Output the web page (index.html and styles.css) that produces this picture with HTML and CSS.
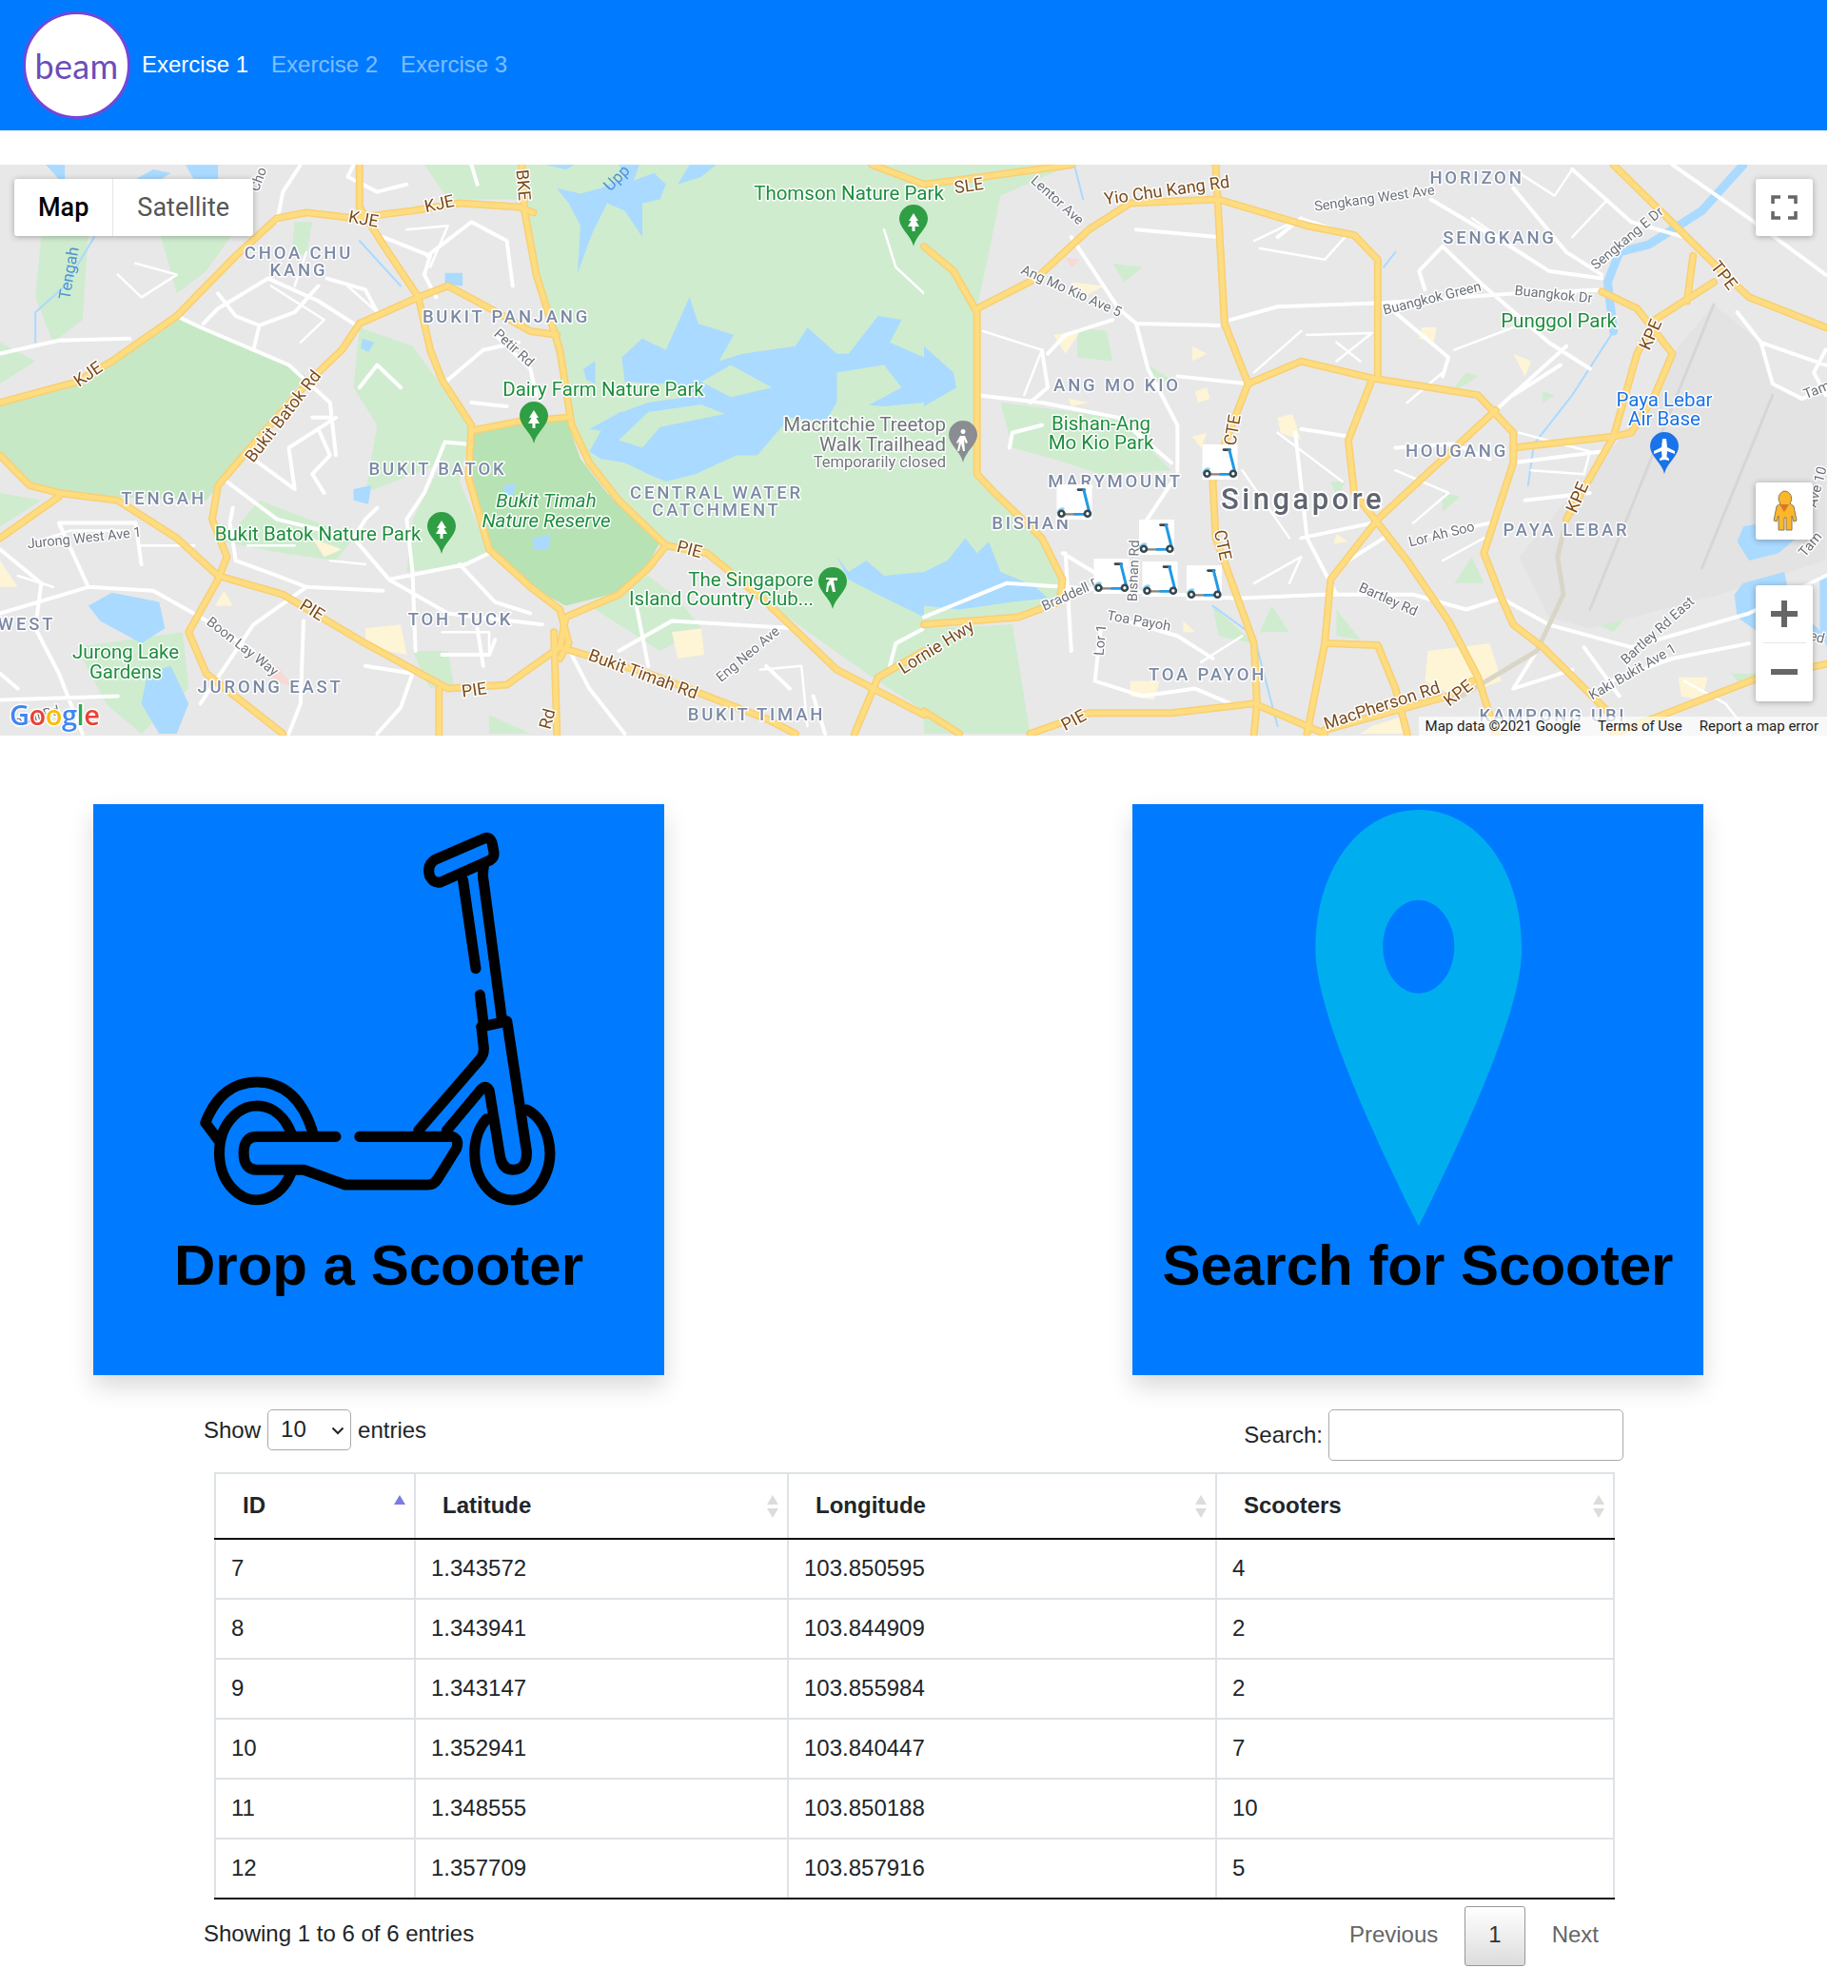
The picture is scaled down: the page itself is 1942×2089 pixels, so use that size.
FILE: index.html
```html
<!DOCTYPE html>
<html lang="en">
<head>
<meta charset="utf-8">
<title>Beam</title>
<link rel="stylesheet" href="styles.css">
</head>
<body>
<nav class="navbar">
  <a class="logo"><span class="logo-text">beam</span></a>
  <ul class="nav-links">
    <li><a class="nav-link active">Exercise 1</a></li>
    <li><a class="nav-link">Exercise 2</a></li>
    <li><a class="nav-link">Exercise 3</a></li>
  </ul>
</nav>

<section class="map">
  <svg class="map-canvas" width="1920" height="600" viewBox="0 173 1920 600" xmlns="http://www.w3.org/2000/svg">
    <defs>
      <symbol id="pin" viewBox="0 0 30 44">
        <path d="M15 44C13 33 0 25 0 15a15 15 0 0 1 30 0C30 25 17 33 15 44Z"/>
      </symbol>
      <symbol id="scoot" viewBox="0 0 112 112">
        <rect class="m-box" width="112" height="112"/>
        <path class="m-halo" d="M3 92A15 15 0 0 1 24 79"/>
        <path class="m-handle" d="M68 17H88"/>
        <path class="m-stem" d="M86 18L104 90"/>
        <path class="m-deck" d="M22 95H58"/>
        <path class="m-stem" d="M58 95H90"/>
        <circle class="m-wheel" cx="15" cy="93" r="9"/>
        <circle class="m-wheel" cx="98" cy="93" r="9"/>
      </symbol>
      <g id="hw" class="nss">
        <g transform="translate(0 170) scale(.6193 .3954)">
          <path d="M0 640L130 585 190 530 300 410 400 250 470 150 520 135 600 150 700 130 780 110 880 120 905 135"/>
          <path d="M885 8L890 130 910 300 950 500 970 700 1000 800 1050 900 1130 1020 1200 1040 1300 1170 1420 1350 1568 1470"/>
          <path d="M610 8L610 120 650 220 710 360 730 500 750 580 800 700 795 840 830 1030 900 1130 950 1190 965 1280 950 1320"/>
          <path d="M0 780L50 860 100 880 200 900 300 1000 370 1100 480 1150 620 1280 760 1400 860 1390 950 1290 960 1210 1050 1150 1100 1080 1130 1020"/>
          <path d="M710 360L610 430 580 500 520 590 430 750 370 860 360 950 385 1050 370 1110 320 1250 350 1360 480 1520"/>
          <path d="M710 360L760 330 820 380 900 450 945 460"/>
          <path d="M800 715L880 690 960 680"/>
          <path d="M0 1000L100 890"/>
          <path d="M950 1290L1100 1360 1300 1480 1350 1520"/>
          <path d="M745 1400L745 1520M940 1250L945 1520"/>
          <path d="M1568 1300L1490 1370 1450 1520"/>
          <path d="M1480 8L1568 60"/>
        </g>
        <g transform="translate(971 170) scale(.6193 .3954)">
          <path d="M0 60L100 40 250 8"/>
          <path d="M90 390L190 310 280 180 350 110 500 100 650 170 730 195 770 260 770 570"/>
          <path d="M495 8L510 430 550 590 510 750 490 850 495 1000 560 1280 565 1440 560 1520"/>
          <path d="M0 225L50 290 90 400 90 830 120 880 200 1000 235 1110 230 1170 160 1210 0 1230"/>
          <path d="M550 590L640 530 760 575 940 620 1000 720 1000 800 950 1040 980 1160 1000 1230 1050 1290 1160 1460"/>
          <path d="M760 580L720 740 730 880 770 960 820 1060 890 1220 940 1370 970 1520"/>
          <path d="M970 660L770 950 690 1110 680 1280 650 1520"/>
          <path d="M680 1280L770 1285 800 1400 820 1520"/>
          <path d="M1000 760L1170 730 1210 510 1240 420 1340 320"/>
          <path d="M1170 730L1090 950"/>
          <path d="M1170 8L1340 270 1400 360 1530 440"/>
          <path d="M1150 345L1210 390 1270 510 1240 620 1200 720 1170 730"/>
          <path d="M1305 250L1295 370"/>
          <path d="M180 1520L280 1465 420 1465 560 1440 680 1520"/>
          <path d="M0 1460L60 1520"/>
          <path d="M680 1510L890 1420 930 1380"/>
          <path d="M1170 1520L1410 1375 1530 1335"/>
        </g>
      </g>
    </defs>

    <rect class="land" x="0" y="173" width="1920" height="600"/>

    <g transform="translate(0 170) scale(.6193 .3954)">
      <path class="green" d="M720 8H1568V1460L1480 1370 1300 1170 1200 1040 1130 1020 1050 900 1000 800 970 680 910 300 890 130 880 100 760 100Z"/>
      <path class="green-d" d="M0 640L130 585 190 530 300 410 340 440 490 540 520 570 430 740 370 860 350 900 200 890 100 880 50 860 0 780Z"/>
      <path class="green" d="M610 440L700 490 760 620 800 710 780 850 830 1040 780 1070 690 1090 700 950 750 800 620 880 640 700 600 600Z"/>
      <path class="green" d="M0 480L60 530 0 590ZM70 200L150 190 140 420 90 480 60 360Z"/>
      <path class="green" d="M380 1010L440 900 540 960 600 1000 570 1060 480 1040Z"/>
      <path class="green" d="M130 1290L310 1250 320 1400 240 1520 180 1440Z"/>
      <path class="green" d="M270 180L400 180 350 290 300 350ZM500 160L530 160 520 250 495 240Z"/>
      <path class="green" d="M0 880L70 900 0 970Z"/>
      <path class="green" d="M700 1300L760 1300 770 1390 730 1400ZM830 1470L900 1520 830 1520ZM1000 1180L1100 1100 1150 1160 1190 1240 1120 1300Z"/>
      <path class="green-x" d="M800 720L880 690 960 680 985 790 1030 880 1120 1010 1090 1100 1060 1140 960 1180 900 1130 840 1050 820 960 795 850 795 760Z"/>
      <path class="water" d="M925 8H975L960 20ZM945 70L985 85 1020 70 1060 40 1050 8H1085L1075 50 1110 30 1130 60 1120 100 1090 110 1090 200 1060 130 1030 110 1005 190 980 295 985 170 965 110ZM1170 8H1215L1190 40 1150 60Z"/>
      <path class="water" d="M1000 770L1020 715 1000 710 1060 660 1030 680 1100 640 1190 620 1130 590 1060 585 1055 520 1090 470 1130 500 1170 360 1185 430 1245 460 1220 530 1260 510 1350 490 1370 440 1420 510 1440 510 1490 410 1530 420 1510 480 1568 520V640L1500 650 1420 640 1400 690 1340 680 1285 780 1250 780 1180 830 1130 850 1100 830 1060 800 1020 790Z"/>
      <path class="green" d="M1240 540L1310 600 1240 625 1190 585ZM1190 645L1230 670 1120 705 1090 760 1050 740 1100 665ZM1420 560L1500 540 1530 600 1470 650 1420 640ZM1250 450L1280 430 1340 470 1310 495 1260 500Z"/>
      <path class="water" d="M1420 1050L1440 1090 1470 1060 1500 1100 1568 1090V1210L1490 1150 1440 1110Z"/>
      <path class="water" d="M150 1180L190 1145 270 1170 280 1240 240 1280 170 1220ZM250 1360L290 1340 320 1440 300 1520 270 1520 240 1440ZM600 870L630 860 625 910 600 900ZM615 470L635 480 625 505 612 495ZM905 1000L935 990 930 1030 905 1030ZM855 860L875 855 870 890 855 885ZM755 295L785 295 785 330 755 325ZM110 60L80 8H110ZM215 60L260 20 290 30 270 50ZM315 8H370L370 50 330 50ZM990 550L1010 530 1010 590 995 580Z"/>
      <path class="beige" d="M620 1240L680 1230 690 1310 620 1290ZM1140 1250L1190 1240 1195 1310 1150 1320ZM0 1060L30 1130H0ZM380 1140L395 1180 365 1180ZM530 1000L580 1030 550 1050Z"/>
      <path class="pinkish" d="M470 1340L500 1400 455 1370Z"/>
      <g class="nss">
        <path class="wr" d="M510 8L480 80 470 160M300 410L340 440 430 500 490 540 560 640 570 780M0 510L100 475 220 470M455 310L540 370 600 430M455 310L370 390 345 430M370 350L400 410 440 435 500 400 540 330M440 435L430 500M555 310L620 340 640 400M650 200L730 250 720 300 740 360M725 250L800 160 860 210 870 330M840 460L900 550 910 620M760 580L820 500 880 480M800 640L860 650M755 745L790 750M755 745L720 880 690 950 700 1090 705 1300M385 850L470 950 600 1000 660 1110 790 1070 830 1040M430 790L500 870 490 760 570 680M395 920L390 960 400 1060 470 1100 520 1130 650 1140M0 1200L150 1130 260 1140 340 1210 430 1300M150 1130L100 960 230 960 240 1070M520 1130L430 1230 340 1440M515 1220L510 1440 490 1520M660 1110L760 1200 920 1230M780 1070L840 1170 900 1200M0 1030L70 1120 60 1240 100 1360 140 1520M0 1430L200 1420M750 1310L830 1310 840 1270M1050 1300L1140 1220 1350 1240M960 1280L1000 1400 1060 1520M1568 1240L1520 1280 1510 1340M1300 1340L1340 1400M620 1340L700 1360 680 1450 640 1520M0 1360L30 1400M600 8L590 40 640 80 690 60M800 8L810 60M610 600L640 540 680 600M530 680H560M540 710L560 780 530 830 550 880M600 1000L620 950 640 920M810 1240L820 1340M1380 1420L1400 1520M1080 1180L1100 1340"/>
        <path class="wr-t" d="M200 300L240 360 300 300 230 270M690 180L760 170 730 280M1500 180L1520 280 1568 350M1290 1350L1360 1340 1370 1500M520 240L500 330M590 330L640 400M460 330L550 420M550 420L510 480M80 1000L120 980 210 980M240 1020L330 1020M30 1100L90 1130M420 1020L500 1020M620 1070L560 1060M750 1250L830 1250 830 1300"/>
        <path class="blue-l" d="M80 8L110 60M160 200L110 330 60 400 60 480M610 210L680 330M905 1000L920 1020"/>
      </g>
    </g>

    <g transform="translate(971 170) scale(.6193 .3954)">
      <path class="green" d="M0 8H250L130 90 90 390 90 830 120 880 200 1000 235 1110 230 1170 160 1210 0 1230Z"/>
      <path class="water" d="M0 490L50 560 55 600 0 650ZM0 1090L40 1060 70 1000 90 1040 110 1010 130 1090 190 1130 210 1160 150 1170 60 1190 0 1180Z"/>
      <path class="green" d="M320 270L370 280 340 320ZM260 440L310 450 320 530 260 520ZM130 640L330 680 420 820 300 830 220 790 150 760ZM490 1180L560 1280 500 1260ZM150 1230L180 1520H0V1240ZM590 1180L620 1250 570 1250ZM700 1190L740 1270 700 1260ZM1130 1220L1190 1210 1170 1250ZM1370 1360L1420 1360 1390 1400ZM380 540L420 580 390 590ZM920 560L940 570 890 620ZM930 1050L950 1120 900 1120ZM690 850L715 850 700 890ZM880 880L910 890 880 930ZM1050 610L1070 620 1050 640Z"/>
      <path class="airport" d="M1340 380L1420 480 1440 590 1490 630 1530 620V1060L1350 1150 1130 1240 1060 1210 1010 1050 1090 900 1190 720 1240 620 1270 510Z"/>
      <path class="water" d="M1390 970L1450 950 1480 1000 1450 1040 1400 1060 1380 1010ZM1390 1120L1460 1090 1470 1170 1530 1260 1450 1290 1380 1210 1375 1150ZM1520 1100L1532 1100V1290L1520 1240Z"/>
      <path class="beige" d="M250 320L305 330 265 365ZM220 460L265 450 240 510ZM455 490L480 510 455 530ZM600 680L625 670 640 740 605 720ZM845 440L870 440 865 480 840 470ZM1000 510L1030 530 1020 570ZM245 630L280 640 250 650ZM460 610L480 600 485 630 465 640ZM855 1300L960 1280 980 1380 900 1420 850 1380ZM350 1380L400 1380 390 1430 350 1420ZM1280 1370L1330 1370 1320 1430 1285 1420ZM440 1220L460 1250 440 1250ZM700 990L720 1010 695 1015ZM760 1500L820 1470 820 1520 740 1520ZM455 730L480 720 470 760Z"/>
      <path class="pinkish" d="M240 255L265 260 250 280Z"/>
      <g class="nss">
        <path class="river" d="M1390 8L1320 130 1230 220 1180 240 1160 320 1170 450"/>
        <path class="blue-l" d="M1170 450L1100 620 1035 750 1025 860M255 8L270 100M800 240L780 280M490 1180L560 1260 600 1500"/>
        <path class="wr" d="M170 330L280 180M250 200L330 390 360 430 380 550 430 700 430 820M360 430L500 435M520 420L600 385 780 375 1000 350 1150 340M210 510L240 460 320 420M200 500L210 600 180 640M90 620L200 640 330 680 420 800M145 760L150 720 200 700M430 570L550 590M780 375L890 520 880 570M880 225L950 330 1060 480 1130 550M1090 490L970 660M880 225L840 290 850 340M860 100L990 220 1060 290 1150 310M1000 70L1090 240 1150 300M1270 8L1400 150 1530 300M640 710L720 730M0 1210L140 1120 430 1150 530 1160 680 1150 830 1150 920 1190 980 1160 1060 1230 1200 1290 1400 1200 1530 1100M240 1040L250 1300M370 970L430 830M235 1040L330 1130M300 1240L290 1380 370 1420 460 1400 520 1440M340 1220L430 1260 490 1320M1150 1390L1270 1320 1400 1280M1420 480L1440 590 1490 630 1530 600M1380 400L1420 480 1530 540M630 720L650 1000 700 1150M840 1000L960 960M1120 1290L1180 1420M1040 1300L1000 1400 1100 1350M760 960L640 1000M1530 500L1510 560 1530 620M600 200L640 150M1000 800L1150 770M1020 900L1130 880M1000 620L1080 540M800 760L900 750 960 790M780 1000L720 1060M500 200L360 180M1100 20L1200 160 1290 200"/>
        <path class="wr-t" d="M560 210L640 150 720 190 680 260 570 230M650 460L760 455 700 530M100 450L200 500 170 620M950 1000L880 1060M1010 720L1130 770 1120 830 1030 820M540 820L620 1000M600 720L710 850M1010 30L1070 90 1100 20M560 1120L640 1050 620 1120M820 640L880 560M700 480L740 530M560 560L640 450M800 820L890 880 830 960M540 1260L470 1330M1290 1380L1360 1440 1400 1520M900 500L1000 440M930 150L1020 250M1160 100L1100 200"/>
        <path class="runway" d="M1340 380L1130 1190M1440 620L1320 1080"/>
        <path class="tunnel" d="M1090 950L1075 1050 1085 1150 1040 1300 890 1440"/>
      </g>
    </g>

    <use href="#hw" class="hw-case"/>
    <use href="#hw" class="hw-fill"/>

    <g class="l-road">
      <text transform="translate(463 220) rotate(-12)">KJE</text>
      <text transform="translate(381 236) rotate(10)">KJE</text>
      <text transform="translate(96 398) rotate(-35)">KJE</text>
      <text transform="translate(544 195) rotate(85)">BKE</text>
      <text transform="translate(1019 201) rotate(-8)">SLE</text>
      <text transform="translate(1227 206) rotate(-8)">Yio Chu Kang Rd</text>
      <text transform="translate(302 441) rotate(-52)">Bukit Batok Rd</text>
      <text transform="translate(723 583) rotate(15)">PIE</text>
      <text transform="translate(325 646) rotate(32)">PIE</text>
      <text transform="translate(499 731) rotate(-8)">PIE</text>
      <text transform="translate(674 714) rotate(20)">Bukit Timah Rd</text>
      <text transform="translate(987 685) rotate(-32)">Lornie Hwy</text>
      <text transform="translate(1807 293) rotate(52)">TPE</text>
      <text transform="translate(1740 354) rotate(-66)">KPE</text>
      <text transform="translate(1663 525) rotate(-66)">KPE</text>
      <text transform="translate(1301 453) rotate(-80)">CTE</text>
      <text transform="translate(1279 574) rotate(78)">CTE</text>
      <text transform="translate(1536 733) rotate(-38)">KPE</text>
      <text transform="translate(1454 747) rotate(-18)">MacPherson Rd</text>
      <text transform="translate(1131 762) rotate(-28)">PIE</text>
      <text transform="translate(581 757) rotate(-75)">Rd</text>
    </g>
    <g class="l-minor">
      <text transform="translate(537 369) rotate(42)">Petir Rd</text>
      <text transform="translate(789 691) rotate(-40)">Eng Neo Ave</text>
      <text transform="translate(89 570) rotate(-6)">Jurong West Ave 1</text>
      <text transform="translate(252 683) rotate(38)">Boon Lay Way</text>
      <text transform="translate(1445 213) rotate(-8)">Sengkang West Ave</text>
      <text transform="translate(1713 254) rotate(-40)">Sengkang E Dr</text>
      <text transform="translate(1506 318) rotate(-14)">Buangkok Green</text>
      <text transform="translate(1632 314) rotate(6)">Buangkok Dr</text>
      <text transform="translate(1108 214) rotate(42)">Lentor Ave</text>
      <text transform="translate(1124 310) rotate(24)">Ang Mo Kio Ave 5</text>
      <text transform="translate(1516 566) rotate(-14)">Lor Ah Soo</text>
      <text transform="translate(1457 634) rotate(24)">Bartley Rd</text>
      <text transform="translate(1745 666) rotate(-42)">Bartley Rd East</text>
      <text transform="translate(1718 710) rotate(-30)">Kaki Bukit Ave 1</text>
      <text transform="translate(1196 657) rotate(10)">Toa Payoh</text>
      <text transform="translate(1161 673) rotate(-85)">Lor 1</text>
      <text transform="translate(1131 627) rotate(-24)">Braddell Rd</text>
      <text transform="translate(1196 600) rotate(-88)">Bishan Rd</text>
      <text transform="translate(1911 414) rotate(-22)">Tam</text>
      <text transform="translate(1914 513) rotate(-75)">Ave 10</text>
      <text transform="translate(1904 673) rotate(15)">Bed</text>
      <text transform="translate(1906 575) rotate(-50)">Tam</text>
      <text transform="translate(40 757) rotate(-15)">onal Rd</text>
      <text transform="translate(276 190) rotate(-70)">Cho</text>
    </g>
    <g class="l-water">
      <text transform="translate(78 288) rotate(-80)">Tengah</text>
      <text transform="translate(652 191) rotate(-45)">Upp</text>
    </g>

    <g class="l-area">
      <text x="1552" y="193">HORIZON</text>
      <text x="1576" y="256">SENGKANG</text>
      <text x="314" y="272">CHOA CHU</text>
      <text x="314" y="290">KANG</text>
      <text x="532" y="339">BUKIT PANJANG</text>
      <text x="1174" y="411">ANG MO KIO</text>
      <text x="1531" y="480">HOUGANG</text>
      <text x="460" y="499">BUKIT BATOK</text>
      <text x="1172" y="512">MARYMOUNT</text>
      <text x="172" y="530">TENGAH</text>
      <text x="1084" y="556">BISHAN</text>
      <text x="753" y="524">CENTRAL WATER</text>
      <text x="753" y="542">CATCHMENT</text>
      <text x="1646" y="563">PAYA LEBAR</text>
      <text x="484" y="657">TOH TUCK</text>
      <text x="28" y="662">WEST</text>
      <text x="1269" y="715">TOA PAYOH</text>
      <text x="284" y="728">JURONG EAST</text>
      <text x="795" y="757">BUKIT TIMAH</text>
      <text x="1632" y="758">KAMPONG UBI</text>
    </g>
    <text class="l-city" x="1369" y="535">Singapore</text>

    <g class="l-green">
      <text x="892" y="210">Thomson Nature Park</text>
      <text x="634" y="416">Dairy Farm Nature Park</text>
      <text x="334" y="568">Bukit Batok Nature Park</text>
      <text x="789" y="616">The Singapore</text>
      <text x="758" y="636">Island Country Club...</text>
      <text x="132" y="692">Jurong Lake</text>
      <text x="132" y="713">Gardens</text>
      <text x="1157" y="452">Bishan-Ang</text>
      <text x="1157" y="472">Mo Kio Park</text>
      <text x="1638" y="344">Punggol Park</text>
      <text class="l-italic" x="574" y="533">Bukit Timah</text>
      <text class="l-italic" x="574" y="554">Nature Reserve</text>
    </g>
    <g class="l-grey">
      <text x="994" y="453">Macritchie Treetop</text>
      <text x="994" y="474">Walk Trailhead</text>
      <text class="l-small" x="994" y="491">Temporarily closed</text>
    </g>
    <g class="l-blue">
      <text x="1749" y="427">Paya Lebar</text>
      <text x="1749" y="447">Air Base</text>
    </g>

    <use href="#pin" class="p-green" x="945" y="215" width="30" height="44"/>
    <use href="#pin" class="p-green" x="546" y="422" width="30" height="44"/>
    <use href="#pin" class="p-green" x="449" y="538" width="30" height="44"/>
    <use href="#pin" class="p-green" x="860" y="596" width="30" height="44"/>
    <use href="#pin" class="p-grey" x="997" y="442" width="30" height="44"/>
    <use href="#pin" class="p-blue" x="1734" y="454" width="30" height="44"/>
    <path class="p-icon" d="M960 224l-5 8h2.500l-3.500 6h4.500v5h3v-5h4.500l-3.500-6h2.500Z"/>
    <path class="p-icon" d="M561 431l-5 8h2.500l-3.500 6h4.500v5h3v-5h4.500l-3.500-6h2.500Z"/>
    <path class="p-icon" d="M464 547l-5 8h2.500l-3.500 6h4.500v5h3v-5h4.500l-3.500-6h2.500Z"/>
    <path class="p-icon" d="M868 607h12v3h-4l2 12h-3l-2-8-2 2-1 6h-2l1-9 3-4h-4Z"/>
    <path class="p-icon" d="M1012 451a2.500 2.500 0 1 0 .1 0ZM1009 458h5l3 7-2 1-2-4 1 12h-2l-2-8-2 8h-2l2-10-2 2-1-1Z"/>
    <path class="p-icon" d="M1747 461h4l1 9 8 4v3l-8-3-.5 6 2.500 2v2l-5-1-5 1v-2l2.500-2-.5-6-8 3v-3l8-4Z"/>

    <use href="#scoot" x="1263" y="467" width="38" height="37"/>
    <use href="#scoot" x="1110" y="509" width="38" height="37"/>
    <use href="#scoot" x="1197" y="546" width="37" height="37"/>
    <use href="#scoot" x="1149" y="587" width="38" height="37"/>
    <use href="#scoot" x="1200" y="590" width="38" height="37"/>
    <use href="#scoot" x="1247" y="594" width="37" height="37"/>

    <text class="l-google" x="10" y="762"><tspan class="g-b">G</tspan><tspan class="g-r">o</tspan><tspan class="g-y">o</tspan><tspan class="g-b">g</tspan><tspan class="g-g">l</tspan><tspan class="g-r">e</tspan></text>
  </svg>

  <div class="map-type">
    <span class="map-type-btn current">Map</span>
    <span class="map-type-btn">Satellite</span>
  </div>
  <button class="map-ctl fullscreen" aria-label="Fullscreen">
    <svg width="28" height="26" viewBox="0 0 28 26"><path class="ctl-stroke" d="M2 9V2H10M18 2H26V9M26 17V24H18M10 24H2V17"/></svg>
  </button>
  <button class="map-ctl pegman" aria-label="Street view">
    <svg width="28" height="44" viewBox="0 0 28 44"><path class="peg" d="M14 1a8 8 0 0 1 6 13l4 3 3 15-3 1-2-6v15h-6V29h-2v13H8V27l-2 6-3-1 3-15 4-3A8 8 0 0 1 14 1Z"/><path class="peg-v" d="M9 15h10l-5 8Z"/></svg>
  </button>
  <div class="map-ctl zoom-ctl">
    <span class="zoom-btn"><svg width="28" height="28" viewBox="0 0 28 28"><path class="ctl-fill" d="M11 0h6v11h11v6H17v11h-6V17H0v-6h11Z"/></svg></span>
    <span class="zoom-sep"></span>
    <span class="zoom-btn"><svg width="28" height="6" viewBox="0 0 28 6"><rect class="ctl-fill" width="28" height="6"/></svg></span>
  </div>
  <div class="attribution">
    <span>Map data ©2021 Google</span>
    <span>Terms of Use</span>
    <span>Report a map error</span>
  </div>
</section>

<section class="cards">
  <article class="card">
    <svg class="card-art" width="600" height="449" viewBox="20 13 1518 1136" xmlns="http://www.w3.org/2000/svg">
      <g class="scooter">
        <path d="M930 160L1062 103Q1075 100 1080 115L1085 140Q1087 155 1075 162L945 220Q925 225 915 205Q905 175 930 160Z"/>
        <path d="M1003 215L1037 450"/>
        <path d="M1058 180Q1054 200 1058 220L1107 590"/>
        <path d="M1048 520L1057 592"/>
        <path d="M1052 605L1120 590L1172 935Q1175 985 1135 985Q1105 985 1100 940L1073 775Q1065 758 1052 770L960 880"/>
        <path d="M1052 605L1058 660Q1060 680 1045 695L885 880"/>
        <path d="M665 897L455 897Q420 897 420 940Q420 985 455 985L580 985L690 1025L910 1025Q925 1025 935 1010L985 930Q995 905 975 897L728 897"/>
        <path d="M545 885A100 125 0 1 0 545 995"/>
        <path d="M602 880Q560 752 455 752Q360 752 318 860L352 905"/>
        <path d="M1172 825A100 125 0 1 1 1065 850"/>
      </g>
    </svg>
    <h2 class="card-title">Drop a Scooter</h2>
  </article>
  <article class="card">
    <svg class="card-art" width="600" height="449" viewBox="25 13 1518 1136" xmlns="http://www.w3.org/2000/svg">
      <path class="map-pin" fill-rule="evenodd" d="M786 1135C700 960 512 580 512 400C512 170 640 28 786 28C932 28 1060 170 1060 400C1060 580 872 960 786 1135ZM786 268C734 268 691 324 691 392C691 460 734 516 786 516C838 516 881 460 881 392C881 324 838 268 786 268Z"/>
    </svg>
    <h2 class="card-title">Search for Scooter</h2>
  </article>
</section>

<section class="datatable">
  <div class="dt-top">
    <label class="dt-length">Show
      <select class="dt-select"><option>10</option><option>25</option><option>50</option><option>100</option></select>
      entries</label>
    <label class="dt-search">Search: <input class="dt-input" type="search"></label>
  </div>
  <table class="dt-table">
    <colgroup><col class="c1"><col class="c2"><col class="c3"><col class="c4"></colgroup>
    <thead>
      <tr>
        <th class="sort asc">ID</th>
        <th class="sort">Latitude</th>
        <th class="sort">Longitude</th>
        <th class="sort">Scooters</th>
      </tr>
    </thead>
    <tbody>
      <tr><td>7</td><td>1.343572</td><td>103.850595</td><td>4</td></tr>
      <tr><td>8</td><td>1.343941</td><td>103.844909</td><td>2</td></tr>
      <tr><td>9</td><td>1.343147</td><td>103.855984</td><td>2</td></tr>
      <tr><td>10</td><td>1.352941</td><td>103.840447</td><td>7</td></tr>
      <tr><td>11</td><td>1.348555</td><td>103.850188</td><td>10</td></tr>
      <tr><td>12</td><td>1.357709</td><td>103.857916</td><td>5</td></tr>
    </tbody>
  </table>
  <div class="dt-bottom">
    <div class="dt-info">Showing 1 to 6 of 6 entries</div>
    <div class="dt-paginate">
      <a class="page-btn">Previous</a>
      <a class="page-btn current">1</a>
      <a class="page-btn">Next</a>
    </div>
  </div>
</section>
</body>
</html>
```
FILE: styles.css
```css
*{box-sizing:border-box}
html,body{margin:0;padding:0;background:#fff}
body{width:1920px;font-family:"Liberation Sans",Arial,sans-serif;font-size:24px;color:#212529;line-height:36px}

.navbar{height:137px;background:#007bff;display:flex;align-items:center;padding-left:24px}
.logo{width:113px;height:113px;border-radius:50%;background:#fff;border:3px solid #7248d8;display:flex;align-items:center;justify-content:center}
.logo-text{font-family:Lato,sans-serif;font-size:36px;line-height:40px;color:#6c4db8;letter-spacing:.3px}
.nav-links{list-style:none;display:flex;margin:-2px 0 0;padding:0}
.nav-link{display:block;padding:0 12px;color:rgba(255,255,255,.5)}
.nav-link.active{color:#fff}

.map{position:relative;width:1920px;height:600px;margin-top:36px;overflow:hidden;font-family:Roboto,sans-serif}
.map-canvas{display:block;filter:blur(.45px)}
.land{fill:#e8e8e8}
.green{fill:#cfeccf}
.green-d{fill:#c7e8c5}
.green-x{fill:#b7e2b3}
.water{fill:#aadaff}
.beige{fill:#fdf5d6}
.pinkish{fill:#f8d9d4}
.airport{fill:#e3e3e3}
.nss path{vector-effect:non-scaling-stroke;fill:none;stroke-linecap:round;stroke-linejoin:round}
.wr{stroke:#fff;stroke-width:4px}
.wr-t{stroke:#fff;stroke-width:2.500px}
.blue-l{stroke:#aadaff;stroke-width:2px}
.river{stroke:#aadaff;stroke-width:9px}
.runway{stroke:#d6d6d6;stroke-width:3px}
.tunnel{stroke:#d9d6c8;stroke-width:5px}
.hw-case{stroke:#f9cf73;stroke-width:8px}
.hw-fill{stroke:#fedc80;stroke-width:5px}

.map-canvas text{paint-order:stroke;stroke:#fff;stroke-linejoin:round;font-family:Roboto,sans-serif}
.l-road text{font-size:18px;fill:#7a4a1c;stroke-width:3px;text-anchor:middle;font-weight:400}
.l-minor text{font-size:14.500px;fill:#6b7078;stroke-width:3px;text-anchor:middle}
.l-water text{font-size:17px;fill:#4f94d4;stroke-width:0;text-anchor:middle}
.l-area text{font-size:18.500px;font-weight:500;fill:#7c8aa5;stroke-width:3px;text-anchor:middle;letter-spacing:2.800px}
.l-city{font-size:31px;font-weight:500;fill:#5f6570;stroke-width:4px;text-anchor:middle;letter-spacing:3.500px}
.l-green text{font-size:20.500px;fill:#1e8e3e;stroke-width:3px;text-anchor:middle}
.map-canvas .l-italic{font-style:italic;font-size:20.500px}
.l-grey text{font-size:20.500px;fill:#70757a;stroke-width:3px;text-anchor:end}
.map-canvas .l-small{font-size:16.500px}
.l-blue text{font-size:20.500px;fill:#1a73e8;stroke-width:3px;text-anchor:middle}
.map-canvas .l-google{font-family:"Open Sans",sans-serif;font-size:29px;font-weight:600;stroke-width:3px;letter-spacing:-.5px}
.g-b{fill:#4285f4}
.g-r{fill:#ea4335}
.g-y{fill:#fbbc05}
.g-g{fill:#34a853}
.p-green{fill:#2f9e44}
.p-grey{fill:#8a8d91}
.p-blue{fill:#1a73e8}
.p-icon{fill:#fff}
.m-box{fill:#fff}
.m-halo{fill:none;stroke:#8fd5f6;stroke-width:8}
.m-handle{fill:none;stroke:#3b4650;stroke-width:8;stroke-linecap:round}
.m-stem{fill:none;stroke:#1f9ae6;stroke-width:9;stroke-linecap:round}
.m-deck{fill:none;stroke:#8b8580;stroke-width:7}
.m-wheel{fill:#fff;stroke:#37474f;stroke-width:8}

.map-type{position:absolute;left:15px;top:15px;height:60px;display:flex;background:#fff;border-radius:3px;box-shadow:0 1px 6px rgba(0,0,0,.3);font-size:27px;line-height:60px}
.map-type-btn{padding:0 25px 0 25px;color:#565656}
.map-type-btn.current{color:#000;font-weight:500;border-right:1px solid #e6e6e6}
.map-ctl{position:absolute;left:1845px;width:60px;background:#fff;border:0;padding:0;border-radius:3px;box-shadow:0 1px 6px rgba(0,0,0,.3);display:flex;align-items:center;justify-content:center}
.fullscreen{top:15px;height:60px}
.pegman{top:334px;height:60px}
.zoom-ctl{top:442px;height:122px;flex-direction:column;justify-content:flex-start}
.zoom-btn{height:60px;width:100%;display:flex;align-items:center;justify-content:center}
.zoom-sep{width:45px;height:1px;background:#e6e6e6;flex:none}
.ctl-stroke{fill:none;stroke:#666;stroke-width:3.500}
.ctl-fill{fill:#666}
.peg{fill:#fbb62b;stroke:#8a7a5a;stroke-width:1}
.peg-v{fill:#d8762a}
.attribution{position:absolute;right:0;bottom:0;height:20px;display:flex;gap:18px;padding:0 9px 0 7px;background:rgba(255,255,255,.7);font-size:15px;line-height:20px;color:#222}

.cards{display:flex;gap:492px;padding-left:98px;margin-top:72px}
.card{width:600px;height:600px;background:#007bff;box-shadow:0 12px 24px rgba(0,0,0,.15);display:flex;flex-direction:column}
.card-art{display:block;flex:none}
.card-title{margin:0;text-align:center;color:#000;font-size:60px;line-height:72px;font-weight:700;white-space:nowrap}
.scooter path{fill:none;stroke:#000;stroke-width:28;stroke-linecap:round;stroke-linejoin:round}
.map-pin{fill:#00aeef}

.datatable{width:1492px;margin:36px 0 0 214px}
.dt-top{display:flex;justify-content:space-between;align-items:flex-start;height:66px}
.dt-length{display:flex;align-items:center;gap:7px;height:43px}
.dt-select{appearance:none;width:88px;height:43px;padding:0 0 2px 13px;font:24px "Liberation Sans",Arial,sans-serif;color:#212529;border:1px solid #aaa;border-radius:5px;background:#fff url("data:image/svg+xml,%3Csvg xmlns='http://www.w3.org/2000/svg' width='14' height='9'%3E%3Cpath d='M1.500 1.500L7 7l5.500-5.500' fill='none' stroke='%23222' stroke-width='2'/%3E%3C/svg%3E") no-repeat 66px 17px}
.dt-search{display:flex;align-items:center;gap:6px;height:54px}
.dt-input{width:310px;height:54px;border:1px solid #aaa;border-radius:5px;background:#fff;padding:0 6px;font-size:24px}

.dt-table{width:1470px;margin-left:11px;border-collapse:collapse;table-layout:fixed}
.c1{width:210px}
.c2{width:392px}
.c3{width:450px}
.c4{width:418px}
.dt-table th{position:relative;height:69px;padding:0 18px 2px 28px;text-align:left;font-weight:700;border:2px solid #dee2e6;border-bottom:2px solid #111}
.dt-table td{height:63px;padding:0 16px 2px;border:2px solid #dee2e6}
.dt-table tbody tr:last-child td{border-bottom:2px solid #111}
.sort::before,.sort::after{content:"";position:absolute;right:9px;width:0;height:0;border-left:6px solid transparent;border-right:6px solid transparent}
.sort::before{top:22px;border-bottom:10px solid #dcdcdc}
.sort::after{top:36px;border-top:10px solid #dcdcdc}
.sort.asc::before{border-bottom-color:#7b7be0}
.sort.asc::after{border-top-color:transparent}

.dt-bottom{display:flex;justify-content:space-between;align-items:flex-start;margin-top:7px}
.dt-info{line-height:36px;padding-top:11px}
.dt-paginate{display:flex;gap:2px}
.page-btn{display:block;height:63px;padding:0 25px;line-height:58px;border:1px solid transparent;border-radius:3px;color:#666}
.page-btn.current{padding:0 24px;color:#333;border-color:#979797;background:linear-gradient(#fff,#dcdcdc)}
```
